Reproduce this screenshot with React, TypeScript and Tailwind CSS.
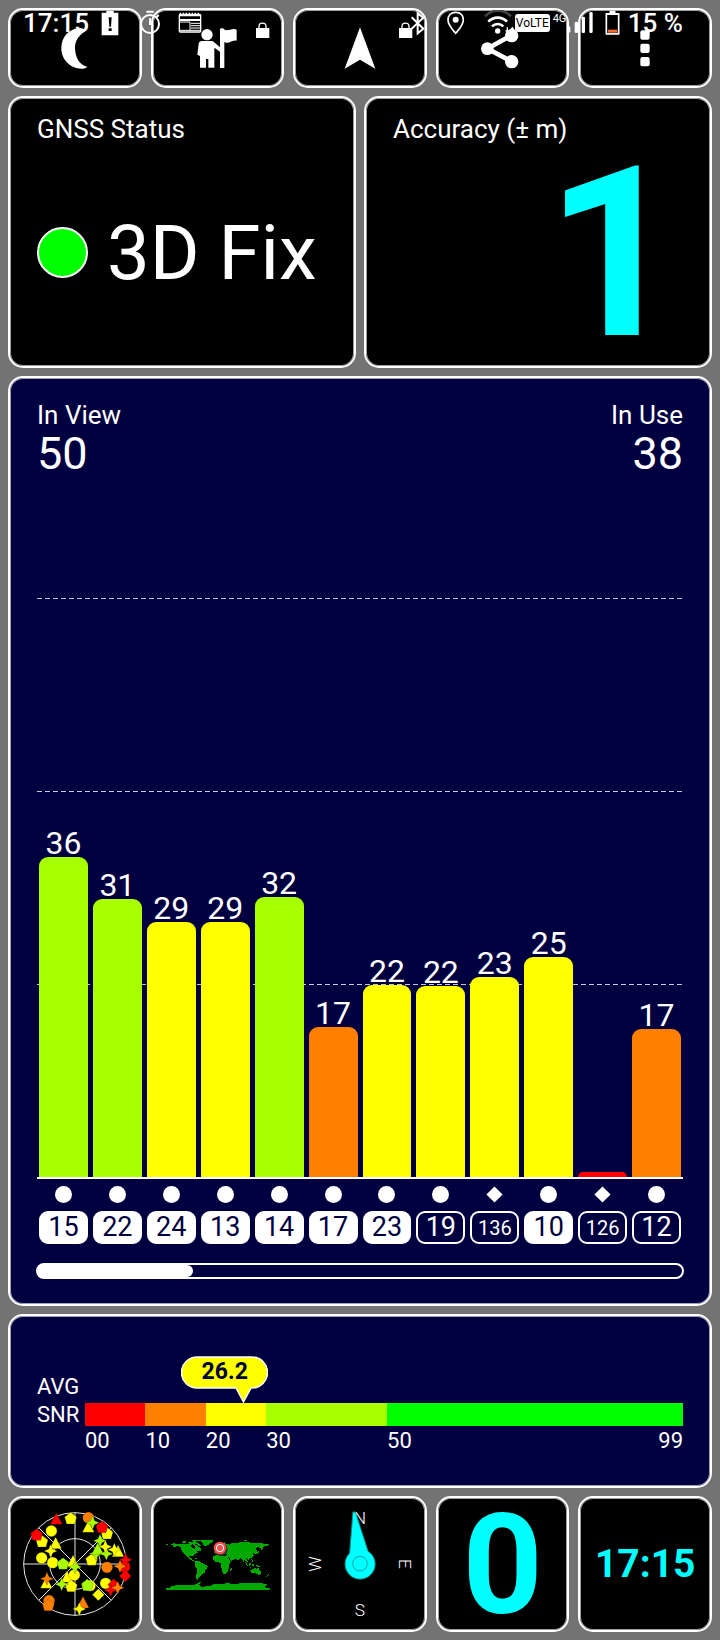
import { clsx } from "clsx";
import type { ReactNode } from "react";

type Shape = "circle" | "diamond" | "triangle" | "pentagon" | "star";

const RED = "#ff0000";
const ORANGE = "#ff8000";
const YELLOW = "#ffff00";
const LIME = "#a8ff00";

// level is the bar height in percent of the plot
const satellites = [
  { id: 15, snr: 36, level: 55.3, bar: "bg-[#a8ff00]", used: true },
  { id: 22, snr: 31, level: 48, bar: "bg-[#a8ff00]", used: true },
  { id: 24, snr: 29, level: 44.1, bar: "bg-[#ffff00]", used: true },
  { id: 13, snr: 29, level: 44.1, bar: "bg-[#ffff00]", used: true },
  { id: 14, snr: 32, level: 48.4, bar: "bg-[#a8ff00]", used: true },
  { id: 17, snr: 17, level: 25.9, bar: "bg-[#ff8000]", used: true },
  { id: 23, snr: 22, level: 33.1, bar: "bg-[#ffff00]", used: true },
  { id: 19, snr: 22, level: 33, bar: "bg-[#ffff00]", used: false },
  { id: 136, snr: 23, level: 34.5, bar: "bg-[#ffff00]", used: false },
  { id: 10, snr: 25, level: 38, bar: "bg-[#ffff00]", used: true },
  { id: 126, snr: 0, level: 0.8, bar: "bg-[#ff0000]", used: false },
  { id: 12, snr: 17, level: 25.6, bar: "bg-[#ff8000]", used: false },
];

const snrRanges = [
  { from: "00", grow: "grow-10", color: "bg-[#ff0000]" },
  { from: "10", grow: "grow-10", color: "bg-[#ff8000]" },
  { from: "20", grow: "grow-10", color: "bg-[#ffff00]" },
  { from: "30", grow: "grow-20", color: "bg-[#a8ff00]" },
  { from: "50", grow: "grow-49", color: "bg-[#00ff00]" },
];

const skyMarks: [Shape, string, number, number][] = [
  ["triangle", RED, 171, 88],
  ["pentagon", YELLOW, 214, 85],
  ["circle", ORANGE, 267, 82],
  ["triangle", YELLOW, 267, 112],
  ["star", LIME, 280, 97],
  ["pentagon", YELLOW, 323, 130],
  ["pentagon", RED, 308, 111],
  ["circle", YELLOW, 156, 122],
  ["pentagon", YELLOW, 128, 154],
  ["pentagon", RED, 112, 134],
  ["triangle", YELLOW, 169, 161],
  ["star", YELLOW, 154, 182],
  ["circle", YELLOW, 127, 203],
  ["circle", YELLOW, 160, 217],
  ["pentagon", LIME, 191, 221],
  ["triangle", YELLOW, 221, 215],
  ["triangle", YELLOW, 203, 262],
  ["circle", YELLOW, 225, 254],
  ["pentagon", YELLOW, 216, 288],
  ["star", LIME, 227, 230],
  ["pentagon", YELLOW, 277, 209],
  ["star", LIME, 290, 190],
  ["triangle", LIME, 295, 178],
  ["star", LIME, 302, 151],
  ["star", LIME, 321, 190],
  ["star", YELLOW, 318, 169],
  ["triangle", YELLOW, 356, 185],
  ["star", YELLOW, 345, 178],
  ["circle", ORANGE, 323, 231],
  ["circle", RED, 376, 229],
  ["star", ORANGE, 362, 228],
  ["star", RED, 379, 208],
  ["diamond", RED, 378, 257],
  ["triangle", YELLOW, 141, 280],
  ["star", ORANGE, 143, 265],
  ["star", LIME, 187, 282],
  ["circle", YELLOW, 272, 286],
  ["pentagon", LIME, 264, 285],
  ["diamond", YELLOW, 297, 313],
  ["circle", YELLOW, 319, 279],
  ["diamond", RED, 343, 283],
  ["star", RED, 334, 299],
  ["star", ORANGE, 355, 292],
  ["circle", ORANGE, 149, 331],
  ["pentagon", ORANGE, 147, 345],
  ["triangle", ORANGE, 251, 339],
  ["star", YELLOW, 240, 356],
];

const shapePaths: Record<Shape, string> = {
  circle: "M-17 0a17 17 0 1 0 34 0a17 17 0 1 0-34 0Z",
  diamond: "M0-18L18 0L0 18L-18 0Z",
  triangle: "M0-21L18 14H-18Z",
  pentagon: "M0-19L18-5L12 16H-12L-18-5Z",
  star: "M0-20L6-6L20 0L6 6L0 20L-6 6L-20 0L-6-6Z",
};

const card = "rounded-[15px] border-2 border-white bg-black shadow-[inset_0_0_0_1px_#ffffffa0]";
const navyCard = "rounded-[15px] border-2 border-white bg-[#000040] shadow-[inset_0_0_0_1px_#ffffffa0]";

function Lock() {
  return (
    <svg viewBox="766 66 45 50" className="absolute right-3 top-3 w-[15px]" fill="#fff">
      <path d="M769 84h40v30h-40Z" />
      <path d="M778 86v-7a10 9 0 0 1 21 0v7" fill="none" stroke="#fff" strokeWidth="4" />
    </svg>
  );
}

function ToolButton({ label, viewBox, locked, children }: { label: string; viewBox: string; locked?: boolean; children: ReactNode }) {
  return (
    <button aria-label={label} className={clsx(card, "relative flex h-20 items-center justify-center")}>
      <svg viewBox={viewBox} className="w-11" fill="#fff">
        {children}
      </svg>
      {locked && <Lock />}
    </button>
  );
}

function Toolbar() {
  return (
    <nav className="grid grid-cols-5 gap-[9px]">
      <ToolButton label="Night mode" viewBox="159 78 132 132">
        <path d="M240 84C205 86 184 112 184 145C184 180 212 206 244 206C252 206 258 204 262 200C240 196 225 172 225 143C225 120 238 106 256 93C253 87 247 84 240 84Z" />
      </ToolButton>
      <ToolButton label="Guide" viewBox="587 78 132 132" locked>
        <circle cx="623" cy="104" r="17" />
        <path d="M608 123H640L662 142V88C662 84 674 84 674 88C684 97 698 82 712 89V122C698 120 688 134 675 126V204H662V155L645 143V203H627V177H620V203H602V168L594 164L598 131C599 126 602 123 608 123Z" />
      </ToolButton>
      <ToolButton label="Navigate" viewBox="1014 78 132 132" locked>
        <path d="M1080 82L1126 206L1080 179L1034 206Z" />
      </ToolButton>
      <ToolButton label="Share" viewBox="361 78 132 132">
        <path d="M454 105L380 146L454 185" fill="none" stroke="#fff" strokeWidth="14" />
        <circle cx="380" cy="146" r="19" />
        <circle cx="453" cy="107" r="20" />
        <circle cx="453" cy="185" r="20" />
      </ToolButton>
      <ToolButton label="More" viewBox="788 78 132 132">
        <rect x="840" y="91" width="28" height="28" rx="6" />
        <rect x="840" y="131" width="28" height="28" rx="6" />
        <rect x="840" y="171" width="28" height="28" rx="6" />
      </ToolButton>
    </nav>
  );
}

function StatusBar() {
  return (
    <header className="pointer-events-none absolute inset-x-0 top-0 z-10 flex h-[46px] items-center justify-between pl-[23px] pr-[37px] text-[26px] font-medium">
      <div className="flex items-center">
        <time>17:15</time>
        {/* battery alert */}
        <svg viewBox="303 31 54 78" className="ml-3 h-[26px] w-[18px]">
          <path d="M319 33H341V39H355V107H305V39H319Z" fill="#fff" />
          <path d="M326 53H335L333 81H328ZM326 86H335V94H326Z" fill="#000" />
        </svg>
        {/* stopwatch */}
        <svg viewBox="417 31 66 78" className="ml-5 h-[26px] w-[22px]" fill="none" stroke="#fff">
          <circle cx="450" cy="73" r="27" strokeWidth="6" />
          <path d="M439 36H461M450 56V76M469 53L476 46" strokeWidth="6" />
        </svg>
        {/* news calendar */}
        <svg viewBox="534 31 72 78" className="ml-[17px] h-[26px] w-6">
          <rect x="538" y="44" width="64" height="53" rx="3" fill="#000" stroke="#fff" strokeWidth="4" />
          <path d="M538 44H602V50H538ZM538 58H602V64H538Z" fill="#fff" />
          <path d="M541 39V48M550 39V48M559 39V48M568 39V48M577 39V48M586 39V48M595 39V48" stroke="#fff" strokeWidth="4" />
          <path d="M540 67H570V93" fill="none" stroke="#fff" strokeWidth="3" />
          <path d="M573 71H600M573 78H600M573 85H600M540 92H600" stroke="#fff" strokeWidth="3" />
        </svg>
      </div>
      <div className="flex items-center">
        {/* bluetooth */}
        <svg viewBox="150 31 45 78" className="h-[26px] w-[15px]" fill="none" stroke="#fff" strokeWidth="6">
          <path d="M155 53L190 87L173 101V41L190 54L155 87" />
        </svg>
        {/* location */}
        <svg viewBox="262 31 51 78" className="ml-[22px] h-[26px] w-[17px]">
          <path d="M288 38C273 38 265 48 265 61C265 76 277 88 288 101C299 88 311 76 311 61C311 48 303 38 288 38Z" fill="none" stroke="#fff" strokeWidth="5" />
          <circle cx="288" cy="60" r="9" fill="#fff" />
        </svg>
        {/* wifi */}
        <svg viewBox="368 31 93 78" className="ml-5 h-[26px] w-[31px]" fill="none" stroke="#fff" strokeWidth="8">
          <path d="M371 50A54 54 0 0 1 449 50" stroke="#444" />
          <path d="M381 66A38 38 0 0 1 437 66M392 80A24 24 0 0 1 426 80" />
          <circle cx="409" cy="94" r="8" fill="#fff" stroke="none" />
          <path d="M438 83V98M433 92L438 98L443 92M453 99V85M448 90L453 84L458 90" strokeWidth="4" />
        </svg>
        <span className="rounded-[3px] bg-white px-px text-[12px] font-normal leading-[18px] text-black">VoLTE</span>
        {/* mobile signal */}
        <svg viewBox="578 31 123 78" className="ml-0.5 h-[26px] w-[41px] overflow-visible" fill="#fff">
          <text x="580" y="66" fontSize="33" className="font-normal">
            4G
          </text>
          <rect x="623" y="80" width="10" height="19" rx="4" />
          <rect x="646" y="66" width="10" height="34" rx="4" />
          <rect x="667" y="51" width="10" height="49" rx="4" />
          <rect x="690" y="37" width="10" height="63" rx="4" />
        </svg>
        {/* battery */}
        <svg viewBox="740 31 44 78" className="ml-3 h-[26px] w-[15px]">
          <path d="M753 33H771V40H783V105H741V40H753Z" fill="#fff" />
          <path d="M746 46H778V100H746Z" fill="#000" />
          <path d="M748 90H776V99H748Z" fill="#ff6b35" />
        </svg>
        <span className="ml-2">15 %</span>
      </div>
    </header>
  );
}

function SignalPanel() {
  return (
    <section className={clsx(navyCard, "flex grow flex-col px-[27px] pb-[25px] pt-[21px]")}>
      <dl className="flex justify-between">
        <div>
          <dt className="text-[26px] leading-8">In View</dt>
          <dd className="text-[45px] leading-[45px]">50</dd>
        </div>
        <div className="text-right">
          <dt className="text-[26px] leading-8">In Use</dt>
          <dd className="text-[45px] leading-[45px]">38</dd>
        </div>
      </dl>

      {/* Bars over the dashed grid */}
      <div className="relative mt-auto h-[579px]">
        <div className="absolute inset-0 flex flex-col">
          {[60, 40, 20].map((line) => (
            <div key={line} className="flex-1">
              <div className="h-px bg-[repeating-linear-gradient(90deg,#c4c4d4_0_5px,transparent_5px_8px)]" />
            </div>
          ))}
        </div>
        <div className="relative grid h-full grid-cols-12 gap-[5px] px-[2px]">
          {satellites.map((sat) => (
            <div key={sat.id} className="flex h-full flex-col justify-end">
              {sat.snr > 0 && <span className="text-center text-[32px] leading-7">{sat.snr}</span>}
              <div className={clsx("shrink-0 rounded-t-[9px]", sat.bar)} style={{ height: `${sat.level}%` }} />
            </div>
          ))}
        </div>
      </div>
      <div className="h-[2px] bg-white" />

      <ul className="grid grid-cols-12 gap-[5px] px-[2px] pt-[7px]">
        {satellites.map((sat) => (
          <li key={sat.id} className="flex flex-col items-center gap-2">
            <svg viewBox="-20 -20 40 40" className="h-[17px]" fill="#fff">
              {sat.id > 100 ? <path d="M0-19L19 0L0 19L-19 0Z" /> : <circle r="20" />}
            </svg>
            <span
              className={clsx(
                "flex h-[33px] w-full items-center justify-center rounded-[9px] border-2 border-white",
                sat.id > 100 ? "text-[20px]" : "text-[27px]",
                sat.used ? "bg-white text-[#000040]" : "text-white"
              )}
            >
              {sat.id}
            </span>
          </li>
        ))}
      </ul>

      <div className="-mx-px mt-[19px] h-4 rounded-full border-2 border-white">
        <div className="h-full w-[24%] rounded-r-full bg-white" />
      </div>
    </section>
  );
}

function AveragePanel() {
  return (
    <section className={clsx(navyCard, "flex h-[174px] items-start px-[27px] pt-[55px] text-[22px] leading-7")}>
      <h2 className="mr-1 mt-0.5 w-[44px]">
        AVG
        <br />
        SNR
      </h2>
      <div className="relative grow pt-8">
        <div className="flex h-[23px]">
          {snrRanges.map((range) => (
            <div key={range.from} className={clsx("basis-0", range.grow, range.color)} />
          ))}
        </div>
        <div className="flex pt-px">
          {snrRanges.map((range) => (
            <span key={range.from} className={clsx("basis-0", range.grow)}>
              {range.from}
            </span>
          ))}
          <span className="absolute right-0">99</span>
        </div>
        <div className="absolute -top-[15px] left-[26.46%]">
          <svg viewBox="0 0 87 48" className="absolute -left-[62px] top-0 w-[87px] max-w-none" fill="#ffff00" stroke="#fff" strokeWidth="1.500">
            <path d="M16 1H71A15.500 15.500 0 0 1 71 32H70L62.500 46L55 32H16A15.500 15.500 0 0 1 16 1Z" />
          </svg>
          <output className="absolute -left-[62px] top-0 w-[87px] text-center text-[23px] font-bold leading-8 text-[#000040]">26.2</output>
        </div>
      </div>
    </section>
  );
}

function SkyPlot() {
  return (
    <svg viewBox="65 59 324 324" className="w-[108px] overflow-visible">
      <g fill="none" stroke="#e4e4e4" strokeWidth="3">
        <circle cx="227" cy="221" r="154" />
        <circle cx="227" cy="221" r="76" />
        <path d="M227 67V375M73 221H381M118 112L336 330M118 330L336 112" />
      </g>
      {skyMarks.map(([shape, color, x, y], i) => (
        <path key={i} d={shapePaths[shape]} transform={`translate(${x} ${y})`} fill={color} stroke="#00000066" strokeWidth="1.500" />
      ))}
    </svg>
  );
}

function WorldMap() {
  return (
    <svg viewBox="69 60 324 324" className="w-[108px]" shapeRendering="crispEdges">
      <g fill="#00a800">
        {/* Americas */}
        <path d="M78 162H84V165H78ZM92 163L100 160L112 161L130 162L150 161L156 164L152 168L158 175L165 176L164 170L160 163L168 164L176 170L184 178L180 184L172 184L174 188L166 191L161 196L160 202L156 198L148 197L149 204L155 205L157 209L163 213L170 212L180 214L190 222L203 227L202 234L196 240L194 248L188 252L182 258L177 262L174 269L168 268L168 258L171 245L172 238L164 228L166 218L158 212L148 208L140 200L134 192L125 184L124 174L116 168L106 170L96 172L100 168Z" />
        <path d="M126 155L134 153L142 156L136 159L127 159ZM144 155L156 157L166 155L176 160L184 168L176 167L168 162L158 161L146 161ZM154 150L180 150L178 154L160 155ZM160 203L170 204L176 208L168 207Z" />
        <path d="M180 150H220L218 157L208 162L200 168L192 168L189 160L182 155Z" />
        {/* Africa */}
        <path d="M222 197L240 195L246 199L262 199L267 207L270 212L275 212L271 218L266 226L266 236L262 246L257 252L249 252L246 242L244 230L242 220L236 216L226 217L219 209L219 201ZM273 234L276 236L272 245L270 240Z" />
        {/* Eurasia */}
        <path d="M222 184L230 180L238 176L250 169L246 160L254 157L258 162L270 164L272 160L292 159L308 155L322 157L340 158L364 160L386 162L389 165L376 169L368 170L370 176L364 180L362 173L352 172L346 178L352 183L350 190L344 192L340 189L341 198L336 204L328 206L326 211L321 207L317 203L314 208L310 216L306 207L300 203L296 210L284 207L274 213L268 202L258 200L260 192L254 188L246 189L238 186L232 190L224 191Z" />
        <path d="M311 150H318L322 154H312ZM313 204L320 206L324 218L318 216ZM354 183L358 184L354 190L346 196L348 190Z" />
        {/* Islands and Australia */}
        <path d="M315 216L322 223L325 229L318 224ZM326 222L334 217L333 226L328 227ZM326 230L338 231L330 233ZM336 222H341V228H337ZM334 207L340 214L336 215ZM344 224L356 227L362 232L350 230ZM331 241L340 236L346 234L350 238L354 232L358 239L364 244L364 250L358 255L350 251L342 248L333 250ZM384 252L387 254L378 262L377 260ZM228 173L234 170L236 177L229 179Z" />
        {/* Antarctica */}
        <path d="M78 294H90L94 289H104V285L120 284L148 286L162 285L174 278L182 277L176 284L182 290L208 289L222 282L250 281L266 279L274 282L292 281L322 278L340 280L366 280L382 284L376 290L380 294H389V300H78Z" />
      </g>
      <g shapeRendering="auto">
        <circle cx="242" cy="177" r="21" fill="#24342c" />
        <circle cx="240" cy="174" r="19" fill="#ee4f4f" />
        <circle cx="240" cy="174" r="11" fill="#ee4f4f" stroke="#fff" strokeWidth="3" />
      </g>
    </svg>
  );
}

function Compass() {
  return (
    <svg viewBox="78 60 324 324" className="w-[108px] overflow-visible">
      <g fill="#fff" fontSize="52" textAnchor="middle" className="font-light">
        <text x="240" y="103">N</text>
        <text x="240" y="377">S</text>
        <text transform="translate(358 222) rotate(90)">E</text>
        <text transform="translate(123 222) rotate(-90)">W</text>
      </g>
      <path d="M219 66H226L264 184A45 45 0 1 1 209 190Z" fill="#00ffff" stroke="#009c9c" strokeWidth="3" />
      <circle cx="240" cy="221" r="22" fill="none" stroke="#00a4a4" strokeWidth="3" />
    </svg>
  );
}

function Tile({ label, children }: { label: string; children: ReactNode }) {
  return (
    <button aria-label={label} className={clsx(card, "flex h-[136px] items-center justify-center font-bold text-[#00ffff]")}>
      {children}
    </button>
  );
}

export default function App() {
  return (
    <div className="relative flex min-h-screen flex-col bg-[#737373] font-['Roboto',sans-serif] text-white">
      <StatusBar />
      <main className="flex grow flex-col gap-2 p-2">
        <Toolbar />

        <div className="grid grid-cols-2 gap-2">
          <section className={clsx(card, "flex h-[272px] flex-col px-[27px] pt-[15px]")}>
            <h2 className="text-[26px] leading-8">GNSS Status</h2>
            <div className="flex grow items-center gap-[19px] pb-1.5">
              <span className="size-[51px] shrink-0 rounded-full border-2 border-white bg-[#00ff00]" />
              <span className="whitespace-nowrap text-[76px] leading-none">3D Fix</span>
            </div>
          </section>
          <section className={clsx(card, "flex h-[272px] flex-col px-[27px] pt-[15px]")}>
            <h2 className="text-[26px] leading-8">Accuracy (± m)</h2>
            <div className="flex grow items-center justify-end pb-1 pr-px">
              <span className="text-[238px] font-bold leading-[200px] text-[#00ffff]">1</span>
            </div>
          </section>
        </div>

        <SignalPanel />
        <AveragePanel />

        <div className="grid grid-cols-5 gap-[9px]">
          <Tile label="Sky view">
            <SkyPlot />
          </Tile>
          <Tile label="World map">
            <WorldMap />
          </Tile>
          <Tile label="Compass">
            <Compass />
          </Tile>
          <Tile label="Speed">
            <span className="pt-0.5 text-[140px] leading-[130px]">0</span>
          </Tile>
          <Tile label="Time">
            <time className="text-[39px]">17:15</time>
          </Tile>
        </div>
      </main>
    </div>
  );
}
